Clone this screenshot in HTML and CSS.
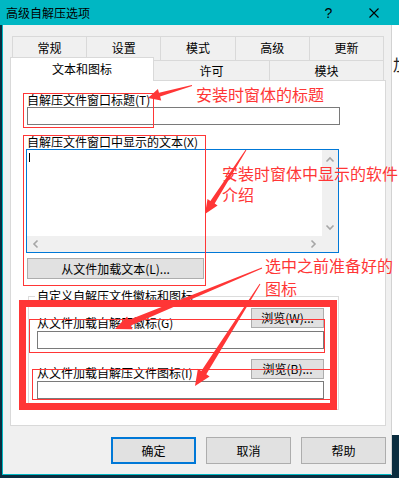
FILE: index.html
```html
<!DOCTYPE html>
<html lang="zh-CN">
<head>
<meta charset="utf-8">
<title>高级自解压选项</title>
<link rel="stylesheet" href="styles.css">
</head>
<body>
<div class="screen">
  <div class="window">
    <div class="titlebar">
      <span class="title">高级自解压选项</span>
      <span class="cap-btn help">?</span>
      <span class="cap-btn close">
        <svg width="10" height="10" viewBox="0 0 10 10"><path d="M0.5 0.5 L9.5 9.5 M9.5 0.5 L0.5 9.5" stroke="#000" stroke-width="1.1" fill="none"/></svg>
      </span>
    </div>
    <div class="body">
      <div class="dialog">
        <div class="tabs">
          <div class="tabrow row1">
            <div class="tab">常规</div>
            <div class="tab">设置</div>
            <div class="tab">模式</div>
            <div class="tab">高级</div>
            <div class="tab last">更新</div>
          </div>
          <div class="tabrow row2">
            <div class="tab selected">文本和图标</div>
            <div class="tab">许可</div>
            <div class="tab last">模块</div>
          </div>
        </div>
        <div class="panel">
          <div class="label">自解压文件窗口标题(T)</div>
          <div class="input wide"></div>
          <div class="label l2">自解压文件窗口中显示的文本(X)</div>
          <div class="textarea">
            <div class="ta-content"><span class="caret"></span></div>
            <div class="vbar">
              <svg width="16" height="16" viewBox="0 0 16 16"><path d="M4.5 9.5 L8 6 L11.5 9.5" stroke="#a6a6a6" stroke-width="1.6" fill="none"/></svg>
              <svg width="16" height="16" viewBox="0 0 16 16"><path d="M4.5 6.5 L8 10 L11.5 6.5" stroke="#a6a6a6" stroke-width="1.6" fill="none"/></svg>
            </div>
            <div class="hbar">
              <svg width="16" height="16" viewBox="0 0 16 16"><path d="M9.5 4.5 L6 8 L9.5 11.5" stroke="#a6a6a6" stroke-width="1.6" fill="none"/></svg>
              <svg width="16" height="16" viewBox="0 0 16 16"><path d="M6.5 4.5 L10 8 L6.5 11.5" stroke="#a6a6a6" stroke-width="1.6" fill="none"/></svg>
            </div>
            <div class="corner"></div>
          </div>
          <div class="btn load">从文件加载文本(L)...</div>
          <div class="group">
            <div class="group-title">自定义自解压文件徽标和图标</div>
            <div class="grow first">
              <span class="label">从文件加载自解压徽标(G)</span>
              <span class="btn browse">浏览(W)...</span>
            </div>
            <div class="input narrow"></div>
            <div class="grow second">
              <span class="label">从文件加载自解压文件图标(I)</span>
              <span class="btn browse">浏览(B)...</span>
            </div>
            <div class="input narrow"></div>
          </div>
        </div>
        <div class="buttons">
          <div class="btn dlg default">确定</div>
          <div class="btn dlg">取消</div>
          <div class="btn dlg">帮助</div>
        </div>
      </div>
      <div class="behind">
        <div class="behind-top"><span class="behind-glyph">加</span></div>
        <div class="behind-bottom"></div>
      </div>
    </div>
  </div>

  <svg class="annot" width="399" height="478" viewBox="0 0 399 478">
    <g fill="none" stroke="#ff3636">
      <rect x="23.5" y="93.5" width="130" height="34" stroke-width="1"/>
      <rect x="23.5" y="135.5" width="182" height="150" stroke-width="1"/>
      <rect x="22.5" y="303.5" width="311" height="103" stroke-width="7"/>
      <rect x="29.5" y="319.5" width="295" height="33" stroke-width="1"/>
      <rect x="32.5" y="369.5" width="298" height="30" stroke-width="1"/>
    </g>
    <g fill="#ff3636">
      <polygon points="191.9,84.9 159,92.8 157.9,88.9 148,98 161.2,100.5 160.1,96.6 192.1,85.9"/>
      <polygon points="245.6,149.7 210.4,200.9 207.5,199 205,214 217.6,205.5 214.7,203.6 246.4,150.3"/>
      <polygon points="261.8,267.5 128.6,320.1 127.1,316.4 115,329 132.5,329.3 130.9,325.6 262.2,268.5"/>
      <polygon points="259.6,283.7 201.3,371 197.9,368.8 195,386 209.6,376.5 206.3,374.3 260.4,284.3"/>
    </g>
    <g class="note" fill="#ff3636">
      <text x="196" y="101">安装时窗体的标题</text>
      <text x="222" y="180">安装时窗体中显示的软件</text>
      <text x="222" y="201">介绍</text>
      <text x="265" y="272">选中之前准备好的</text>
      <text x="265" y="295">图标</text>
    </g>
  </svg>
</div>
</body>
</html>
```

FILE: styles.css
```css
* { box-sizing: border-box; }
html, body { margin: 0; padding: 0; }
body {
  background: #0b2d3f;
  font-family: "Noto Sans CJK SC", "Noto Sans", sans-serif;
  font-size: 12px;
  color: #000;
}
.screen {
  position: relative;
  width: 399px;
  height: 478px;
  overflow: hidden;
  background: #0b2d3f;
}
.window {
  display: flex;
  flex-direction: column;
  height: 475px;
}
.titlebar {
  height: 25px;
  background: #00b7c3;
  display: flex;
  align-items: center;
  padding-left: 6px;
  padding-right: 3px;
}
.title {
  font-size: 12px;
  line-height: 16px;
}
.cap-btn {
  width: 45px;
  height: 25px;
  display: flex;
  align-items: center;
  justify-content: center;
}
.help {
  margin-left: auto;
  font-family: "Liberation Sans", sans-serif;
  font-size: 14px;
}
.body {
  flex: 1;
  display: flex;
}
.dialog {
  margin-left: 2px;
  width: 391px;
  border-left: 1px solid #00b7c3;
  border-bottom: 1px solid #00b7c3;
  background: #f0f0f0;
  padding: 11px 5px 0 7px;
  display: flex;
  flex-direction: column;
}
.behind {
  flex: 1;
  display: flex;
  flex-direction: column;
  border-left: 1px solid #d2d2d2;
}
.behind-top {
  flex: 1;
  background: #fff;
  overflow: hidden;
  padding-top: 30px;
  font-size: 16px;
  line-height: 18px;
  white-space: nowrap;
}
.behind-glyph { margin-left: 1px; color: #222; }
.behind-bottom {
  height: 40px;
  background: #0b2d3f;
}

/* tabs */
.tabrow { display: flex; }
.row1 {
  margin-left: 2px;
  width: 372px;
  height: 24px;
}
.row2 {
  width: 374px;
  height: 20px;
}
.tab {
  flex: 1;
  border-top: 1px solid #d9d9d9;
  border-left: 1px solid #d9d9d9;
  background: #f0f0f0;
  display: flex;
  align-items: center;
  justify-content: center;
  line-height: 14px;
}
.tab.last { border-right: 1px solid #d9d9d9; }
.row1 .tab { padding-bottom: 1px; }
.row2 .tab { flex: 0 0 115px; padding-top: 1px; }
.row2 .tab.selected {
  flex: 0 0 144px;
  height: 24px;
  margin-top: -3px;
  background: #fff;
  border-right: 1px solid #d9d9d9;
  position: relative;
  z-index: 1;
  padding-top: 0;
  padding-bottom: 2px;
}
.row2 .tab.selected + .tab { border-left: none; }

/* panel */
.panel {
  width: 376px;
  height: 346px;
  background: #fff;
  border: 1px solid #d9d9d9;
  padding: 12px 0 0 16px;
  display: flex;
  flex-direction: column;
  align-items: flex-start;
}
.label {
  line-height: 14px;
  white-space: nowrap;
}
.l2 { margin-top: 10px; }
.input {
  height: 18px;
  border: 1px solid #7a7a7a;
  background: #fff;
}
.input.wide { width: 313px; }
.input.narrow { width: 287px; margin-top: 1px; }

.textarea {
  margin-left: -1px;
  width: 313px;
  height: 104px;
  border: 1px solid #0078d7;
  display: grid;
  grid-template-columns: 1fr 16px;
  grid-template-rows: 1fr 16px;
}
.ta-content { padding: 3px 0 0 2px; }
.caret {
  display: block;
  width: 1px;
  height: 9px;
  background: #000;
}
.vbar {
  background: #f0f0f0;
  display: flex;
  flex-direction: column;
  justify-content: space-between;
  padding: 2px 0 1px;
}
.hbar {
  background: #f0f0f0;
  display: flex;
  justify-content: space-between;
  padding: 0 1px 0 1px;
}
.corner { background: #f0f0f0; }
.vbar svg, .hbar svg { display: block; }

.btn {
  background: #e1e1e1;
  border: 1px solid #adadad;
  display: flex;
  align-items: center;
  justify-content: center;
  line-height: 14px;
  white-space: nowrap;
}
.btn.load {
  margin-top: 5px;
  width: 177px;
  height: 21px;
}

/* group box */
.group {
  margin-top: 17px;
  margin-left: 1px;
  width: 311px;
  border: 1px solid #dcdcdc;
  padding: 0 14px 10px 8px;
  display: flex;
  flex-direction: column;
  align-items: flex-start;
}
.group-title {
  margin-top: -8px;
  margin-left: -2px;
  padding: 0 2px;
  background: #fff;
  line-height: 14px;
  white-space: nowrap;
}
.grow {
  width: 287px;
  display: flex;
  justify-content: space-between;
  align-items: flex-end;
}
.grow.first { margin-top: 5px; }
.grow.second { margin-top: 10px; }
.btn.browse {
  width: 73px;
  height: 20px;
  margin-bottom: 2px;
}
.grow.second .btn.browse { margin-bottom: 1px; }

/* bottom buttons */
.buttons {
  margin-top: 11px;
  display: flex;
  justify-content: flex-end;
  gap: 10px;
  padding-right: 0;
}
.btn.dlg {
  width: 85px;
  height: 27px;
}
.btn.default {
  border: 2px solid #0078d7;
}

/* annotations */
.annot {
  position: absolute;
  left: 0;
  top: 0;
  pointer-events: none;
}
.note text {
  font-family: "Noto Sans CJK SC", sans-serif;
  font-size: 16px;
}
```
